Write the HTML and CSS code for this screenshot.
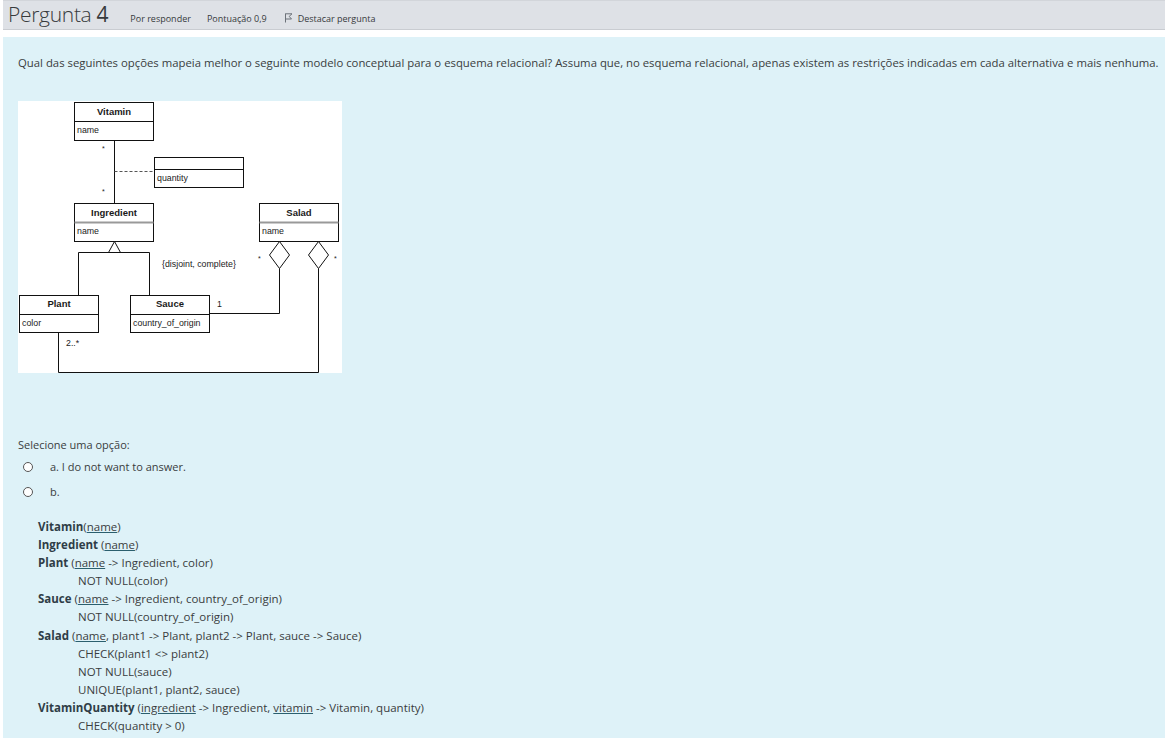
FILE: index.html
```html
<!DOCTYPE html>
<html lang="pt">
<head>
<meta charset="utf-8">
<title>Pergunta 4</title>
<link rel="stylesheet" href="styles.css">
</head>
<body>
<div class="que">
  <div class="info">
    <h3 class="qno">Pergunta <span class="num">4</span></h3>
    <span class="state">Por responder</span>
    <span class="grade">Pontuação 0,9</span>
    <span class="flag">
      <svg class="flag-icon" width="9" height="10" viewBox="0 0 9 10"><path d="M1.5 0.5 V9.5 M1.5 0.8 L8 0.8 L5.2 3.4 L7.5 6 L1.5 6" fill="none" stroke="#6b7178" stroke-width="1"/></svg>
      Destacar pergunta
    </span>
  </div>
  <div class="content">
    <p class="qtext">Qual das seguintes opções mapeia melhor o seguinte modelo conceptual para o esquema relacional? Assuma que, no esquema relacional, apenas existem as restrições indicadas em cada alternativa e mais nenhuma.</p>
    <div class="figure">
      <svg width="324" height="272" viewBox="0 0 324 272" class="uml">
        <rect x="0" y="0" width="324" height="272" fill="#ffffff"/>
        <g fill="none" stroke="#111" stroke-width="1">
          <rect x="56.5" y="1.5" width="79" height="38"/>
          <line x1="56.5" y1="20.5" x2="135.5" y2="20.5"/>
          <line x1="96.5" y1="39.5" x2="96.5" y2="102.5"/>
          <rect x="136.5" y="56.5" width="89" height="30"/>
          <line x1="136.5" y1="68.5" x2="225.5" y2="68.5"/>
          <rect x="56.5" y="102.5" width="79" height="38"/>
          <polygon points="96.5,140.5 90.5,151.5 102.5,151.5" fill="#fff"/>
          <polyline points="60.5,194.5 60.5,151.5 131.5,151.5 131.5,194.5"/>
          <rect x="1.5" y="194.5" width="79" height="37"/>
          <line x1="1.5" y1="213.5" x2="80.5" y2="213.5"/>
          <rect x="112.5" y="194.5" width="79" height="37"/>
          <line x1="112.5" y1="213.5" x2="191.5" y2="213.5"/>
          <rect x="241.5" y="102.5" width="79" height="38"/>
          <polygon points="261.5,140.5 271.5,154 261.5,167.5 251.5,154" fill="#fff"/>
          <polygon points="300.5,140.5 310.5,154 300.5,167.5 290.5,154" fill="#fff"/>
          <polyline points="261.5,167.5 261.5,212.5 191.5,212.5"/>
          <polyline points="300.5,167.5 300.5,271.5 40.5,271.5 40.5,231.5"/>
        </g>
        <line x1="96.5" y1="70.5" x2="136" y2="70.5" stroke="#555" stroke-width="1" stroke-dasharray="3,2"/>
        <line x1="56.5" y1="121.5" x2="135.5" y2="121.5" stroke="#999" stroke-width="2"/>
        <line x1="241.5" y1="121.5" x2="320.5" y2="121.5" stroke="#999" stroke-width="2"/>
        <g class="uml-title" text-anchor="middle">
          <text x="96" y="14">Vitamin</text>
          <text x="96" y="115">Ingredient</text>
          <text x="281" y="115">Salad</text>
          <text x="41" y="206">Plant</text>
          <text x="152" y="206">Sauce</text>
        </g>
        <g class="uml-attr">
          <text x="59" y="32">name</text>
          <text x="139" y="80">quantity</text>
          <text x="59" y="133">name</text>
          <text x="244" y="133">name</text>
          <text x="4" y="225">color</text>
          <text x="115" y="225">country_of_origin</text>
          <text x="144" y="166">{disjoint, complete}</text>
          <text x="199" y="206">1</text>
          <text x="48" y="245">2..*</text>
        </g>
        <g class="uml-star">
          <text x="84" y="50">*</text>
          <text x="84" y="93">*</text>
          <text x="240" y="160">*</text>
          <text x="316" y="160">*</text>
        </g>
      </svg>
    </div>
    <div class="ablock">
      <div class="prompt">Selecione uma opção:</div>
      <div class="answer">
        <div class="opt"><span class="radio"></span><span class="lbl">a. I do not want to answer.</span></div>
        <div class="opt"><span class="radio"></span><span class="lbl">b.</span></div>
        <div class="schema">
          <div class="rel"><b>Vitamin</b>(<u>name</u>)</div>
          <div class="rel"><b>Ingredient</b> (<u>name</u>)</div>
          <div class="rel"><b>Plant</b> (<u>name</u> -&gt; Ingredient, color)</div>
          <div class="cons">NOT NULL(color)</div>
          <div class="rel"><b>Sauce</b> (<u>name</u> -&gt; Ingredient, country_of_origin)</div>
          <div class="cons">NOT NULL(country_of_origin)</div>
          <div class="rel"><b>Salad</b> (<u>name</u>, plant1 -&gt; Plant, plant2 -&gt; Plant, sauce -&gt; Sauce)</div>
          <div class="cons">CHECK(plant1 &lt;&gt; plant2)</div>
          <div class="cons">NOT NULL(sauce)</div>
          <div class="cons">UNIQUE(plant1, plant2, sauce)</div>
          <div class="rel"><b>VitaminQuantity</b> (<u>ingredient</u> -&gt; Ingredient, <u>vitamin</u> -&gt; Vitamin, quantity)</div>
          <div class="cons">CHECK(quantity &gt; 0)</div>
        </div>
      </div>
    </div>
  </div>
</div>
</body>
</html>
```

FILE: styles.css
```css
html, body {
  margin: 0;
  padding: 0;
  background: #ffffff;
}
body {
  font-family: "Open Sans", "Noto Sans", sans-serif;
  color: #3a3d40;
  padding-left: 3px;
}
.que {
  display: flex;
  flex-direction: column;
  height: 738px;
  overflow: hidden;
}
.info {
  flex: none;
  height: 30px;
  background: #dee1e6;
  border-top: 1px solid #d2d5da;
  border-bottom: 1px solid #c9ccd1;
  box-sizing: border-box;
  display: flex;
  align-items: baseline;
  padding-left: 5px;
}
.qno {
  margin: 0;
  font-size: 21px;
  font-weight: 300;
  line-height: 26px;
  color: #373a3c;
  letter-spacing: -0.3px;
}
.qno .num {
  font-weight: 400;
}
.state, .grade, .flag {
  font-size: 9px;
  color: #373a3c;
}
.state { margin-left: 22px; }
.grade { margin-left: 16px; }
.flag { margin-left: 17px; display: inline-flex; align-items: baseline; gap: 5px; }
.flag-icon { position: relative; top: 1px; }
.content {
  flex: 1;
  margin-top: 7px;
  background: #def2f8;
  padding: 18px 4px 0 15px;
}
.qtext {
  margin: 0;
  font-size: 11.35px;
  line-height: 16px;
  white-space: nowrap;
}
.figure {
  margin-top: 30px;
  line-height: 0;
}
.uml { display: block; }
.uml-title {
  font-family: "Liberation Sans", Arial, sans-serif;
  font-size: 9.5px;
  font-weight: bold;
  fill: #1a1a1a;
}
.uml-attr {
  font-family: "Liberation Sans", Arial, sans-serif;
  font-size: 8.8px;
  fill: #222;
}
.uml-star {
  font-family: "Liberation Sans", Arial, sans-serif;
  font-size: 7px;
  fill: #222;
}
.ablock {
  margin-top: 64px;
  font-size: 11px;
}
.prompt {
  line-height: 16px;
}
.answer {
  margin-top: 1px;
}
.opt {
  display: flex;
  align-items: center;
  height: 25px;
}
.radio {
  width: 8px;
  height: 8px;
  border: 1px solid #555;
  border-radius: 50%;
  background: #fff;
  margin-left: 5px;
  margin-right: 17px;
}
.schema {
  margin-top: 14px;
  padding-left: 20px;
  font-size: 11.5px;
  line-height: 18.1px;
}
.schema b {
  font-weight: 700;
  color: #2f3d47;
}
.schema u {
  text-decoration-color: #2b5f6e;
}
.cons {
  padding-left: 40px;
}
```
